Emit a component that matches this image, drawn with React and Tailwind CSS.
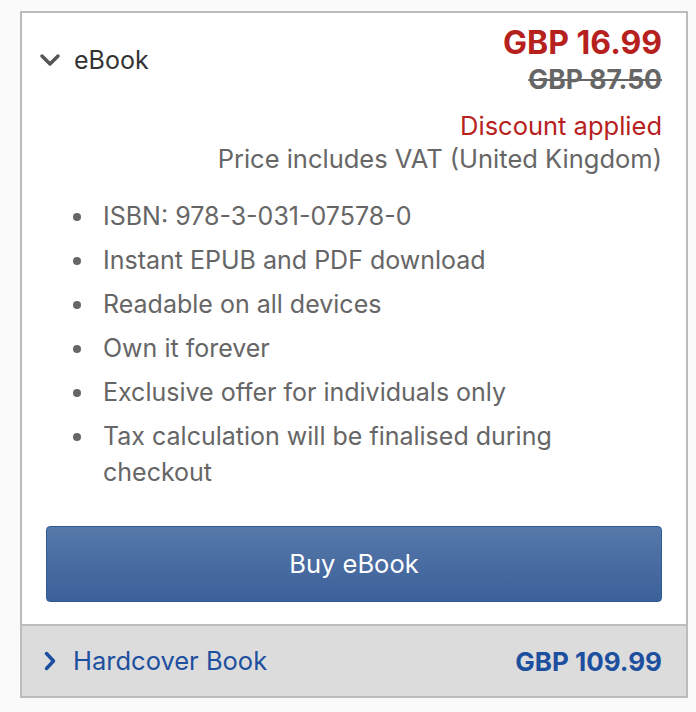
const features = [
  "ISBN: 978-3-031-07578-0",
  "Instant EPUB and PDF download",
  "Readable on all devices",
  "Own it forever",
  "Exclusive offer for individuals only",
  "Tax calculation will be finalised during checkout",
];

export default function App() {
  return (
    <div className="min-h-[712px] bg-[#fafafa] pt-[11px] pl-[20px] font-['Inter','Liberation_Sans',sans-serif]">
      <div className="w-[668px] border-2 border-[#bcbcbc] bg-white">
        {/* eBook section */}
        <div className="px-6 pt-[11px] pb-[22px]">
          <div className="flex items-start justify-between">
            <div className="flex items-center gap-[13px] -ml-[7px] mt-[21px]">
              <svg width="22" height="14" viewBox="0 0 22 14" className="text-[#555]">
                <polyline points="3,3 11,11 19,3" fill="none" stroke="currentColor" strokeWidth="3.5" strokeLinecap="round" strokeLinejoin="round" />
              </svg>
              <span className="text-[25px] leading-[30px] text-[#333]">eBook</span>
            </div>
            <div className="flex flex-col items-end">
              <span className="text-[32px] leading-[38px] font-bold text-[#b7211d]">GBP 16.99</span>
              <span className="mt-[2px] text-[26.5px] leading-[30px] font-bold text-[#666] line-through">GBP 87.50</span>
            </div>
          </div>

          <div className="mt-[15px] flex flex-col items-end text-[25.5px] leading-[33px]">
            <span className="text-[#b7211d]">Discount applied</span>
            <span className="text-[#666]">Price includes VAT (United Kingdom)</span>
          </div>

          <ul className="mt-[23px] flex flex-col gap-[8px] pl-[27px] pr-[60px]">
            {features.map((f) => (
              <li key={f} className="flex items-start gap-[22px] text-[25px] leading-[36px] text-[#666]">
                <span className="mt-[15px] h-[8px] w-[8px] shrink-0 rounded-full bg-[#666]"></span>
                <span>{f}</span>
              </li>
            ))}
          </ul>

          <button className="mt-[36px] flex h-[76px] w-full items-center justify-center rounded-[4px] border border-[#2f5a96] bg-gradient-to-b from-[#5679aa] to-[#3c6099] text-[25.5px] text-white">
            Buy eBook
          </button>
        </div>

        {/* Hardcover section */}
        <div className="flex h-[72px] items-center justify-between border-t-2 border-[#bcbcbc] bg-[#dcdcdc] px-6">
          <div className="flex items-center gap-[16px] -ml-[3px]">
            <svg width="14" height="22" viewBox="0 0 14 22" className="text-[#1d4f9f]">
              <polyline points="3.5,3.5 10.5,11 3.5,18.5" fill="none" stroke="currentColor" strokeWidth="3.5" strokeLinecap="round" strokeLinejoin="round" />
            </svg>
            <span className="text-[25.5px] text-[#1d4f9f]">Hardcover Book</span>
          </div>
          <span className="text-[26px] font-bold text-[#1d4f9f]">GBP 109.99</span>
        </div>
      </div>
    </div>
  );
}
